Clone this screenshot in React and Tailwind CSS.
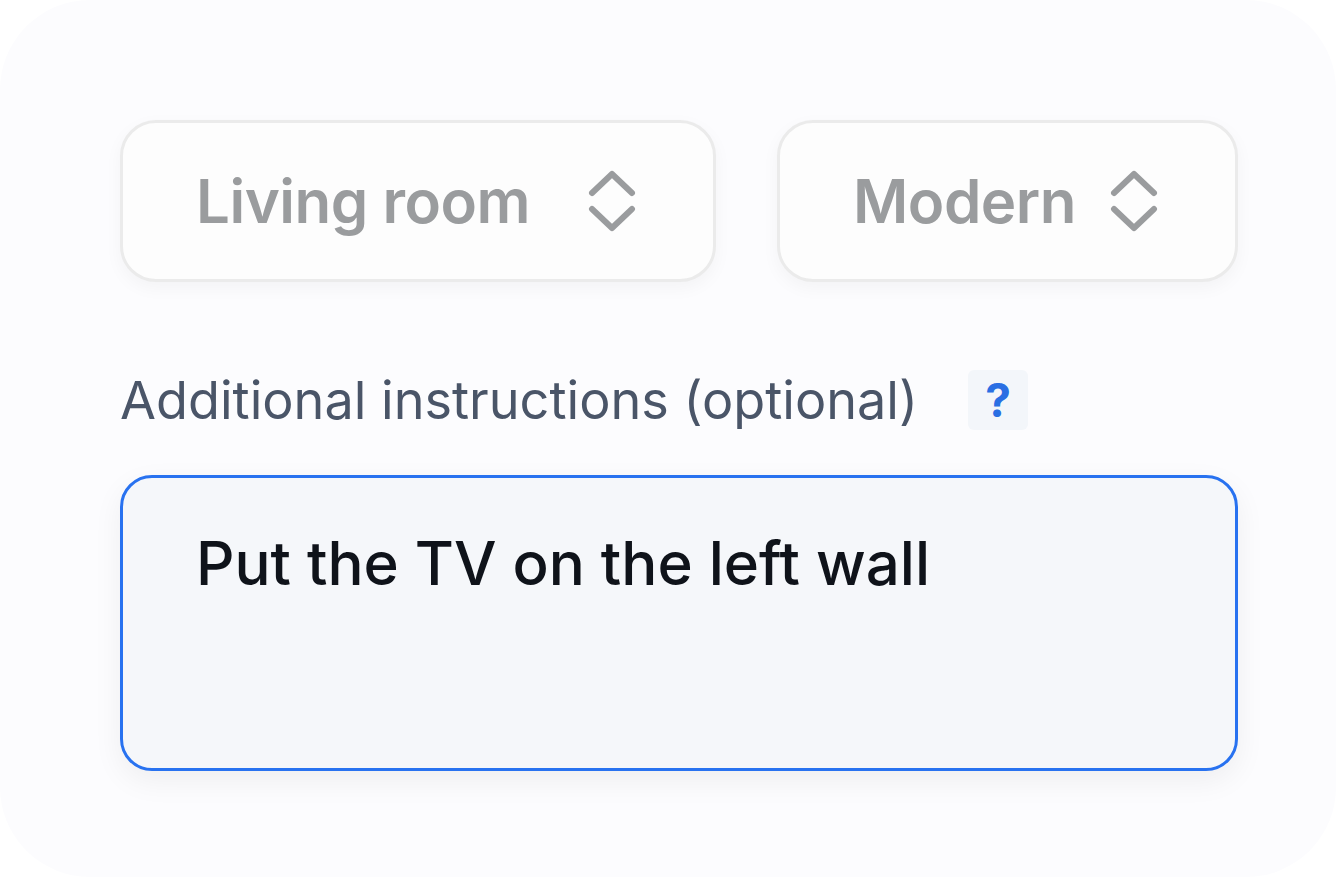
import React from 'react';

const Chevrons = () => (
  <svg width="48" height="62" viewBox="0 0 48 62" fill="none" stroke="#9a9c9e" strokeWidth="6" strokeLinecap="round" strokeLinejoin="round">
    <path d="M4 23 L24 4 L44 23" />
    <path d="M4 39 L24 58 L44 39" />
  </svg>
);

const Select = ({ label, width }) => (
  <div
    className={`flex items-center justify-between h-[162px] pl-[73px] pr-[77px] rounded-[36px] border-[3px] border-[#ebebeb] bg-[#fdfdfd] shadow-[0_6px_18px_rgba(0,0,0,0.04)] ${width}`}
  >
    <span className="text-[60px] font-semibold text-[#9a9c9e] tracking-[-0.5px]">{label}</span>
    <span className="flex">
      <Chevrons />
    </span>
  </div>
);

export default function App() {
  return (
    <div className="w-[1336px] h-[877px] bg-white overflow-hidden" style={{ fontFamily: 'Inter, "Noto Sans", sans-serif' }}>
      <div className="w-full h-full rounded-[90px] bg-[#fcfcfe] pl-[120px] pt-[120px]">
        {/* selects */}
        <div className="flex gap-[61px]">
          <Select label="Living room" width="w-[596px]" />
          <Select label="Modern" width="w-[461px]" />
        </div>

        {/* label */}
        <div className="flex items-center mt-[88px] h-[60px]">
          <span className="text-[52.2px] text-[#4a5568] leading-none">Additional instructions (optional)</span>
          <span className="ml-[50px] w-[60px] h-[60px] flex items-center justify-center rounded-[6px] bg-[#f3f6fa] text-[46px] font-bold text-[#2a6fe3] leading-none">
            ?
          </span>
        </div>

        {/* textarea */}
        <div className="mt-[45px] w-[1118px] h-[296px] rounded-[32px] border-[3px] border-[#2872f0] bg-[#f5f7fa] shadow-[0_10px_30px_rgba(0,0,0,0.06)] pl-[73px] pt-[55px]">
          <span className="text-[60px] font-medium text-[#0f131a] leading-none">Put the TV on the left wall</span>
        </div>
      </div>
    </div>
  );
}
